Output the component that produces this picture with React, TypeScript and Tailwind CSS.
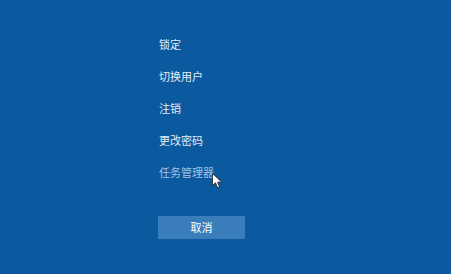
import React from 'react';

const items = ['锁定', '切换用户', '注销', '更改密码'];

export default function App() {
  return (
    <div
      className="relative h-[274px] w-[451px] overflow-hidden bg-[#0b5a9f] text-[11px] text-[#e2ecf6]"
      style={{ fontFamily: '"Microsoft YaHei", "Noto Sans CJK SC", sans-serif' }}
    >
      <div className="flex flex-col pl-[159px] pt-[28px]">
        {items.map((t) => (
          <div key={t} className="flex h-[32px] items-center">
            {t}
          </div>
        ))}
        <div className="relative flex h-[32px] items-center text-[#a3c2e3]">
          任务管理器
          <svg className="absolute left-[53px] top-[17px]" width="11" height="16" viewBox="0 0 11 16">
            <path d="M0.5 0.5 L0.5 12.5 L3.5 9.8 L5.6 14.8 L7.6 14 L5.6 9.2 L9.8 9.2 Z" fill="#fff" stroke="#1a1a1a" strokeWidth="0.8" />
          </svg>
        </div>
        <button className="ml-[-1px] mt-[28px] flex h-[23px] w-[87px] items-center justify-center bg-[#3a7dbb] text-[11px] text-white">
          取消
        </button>
      </div>
    </div>
  );
}
